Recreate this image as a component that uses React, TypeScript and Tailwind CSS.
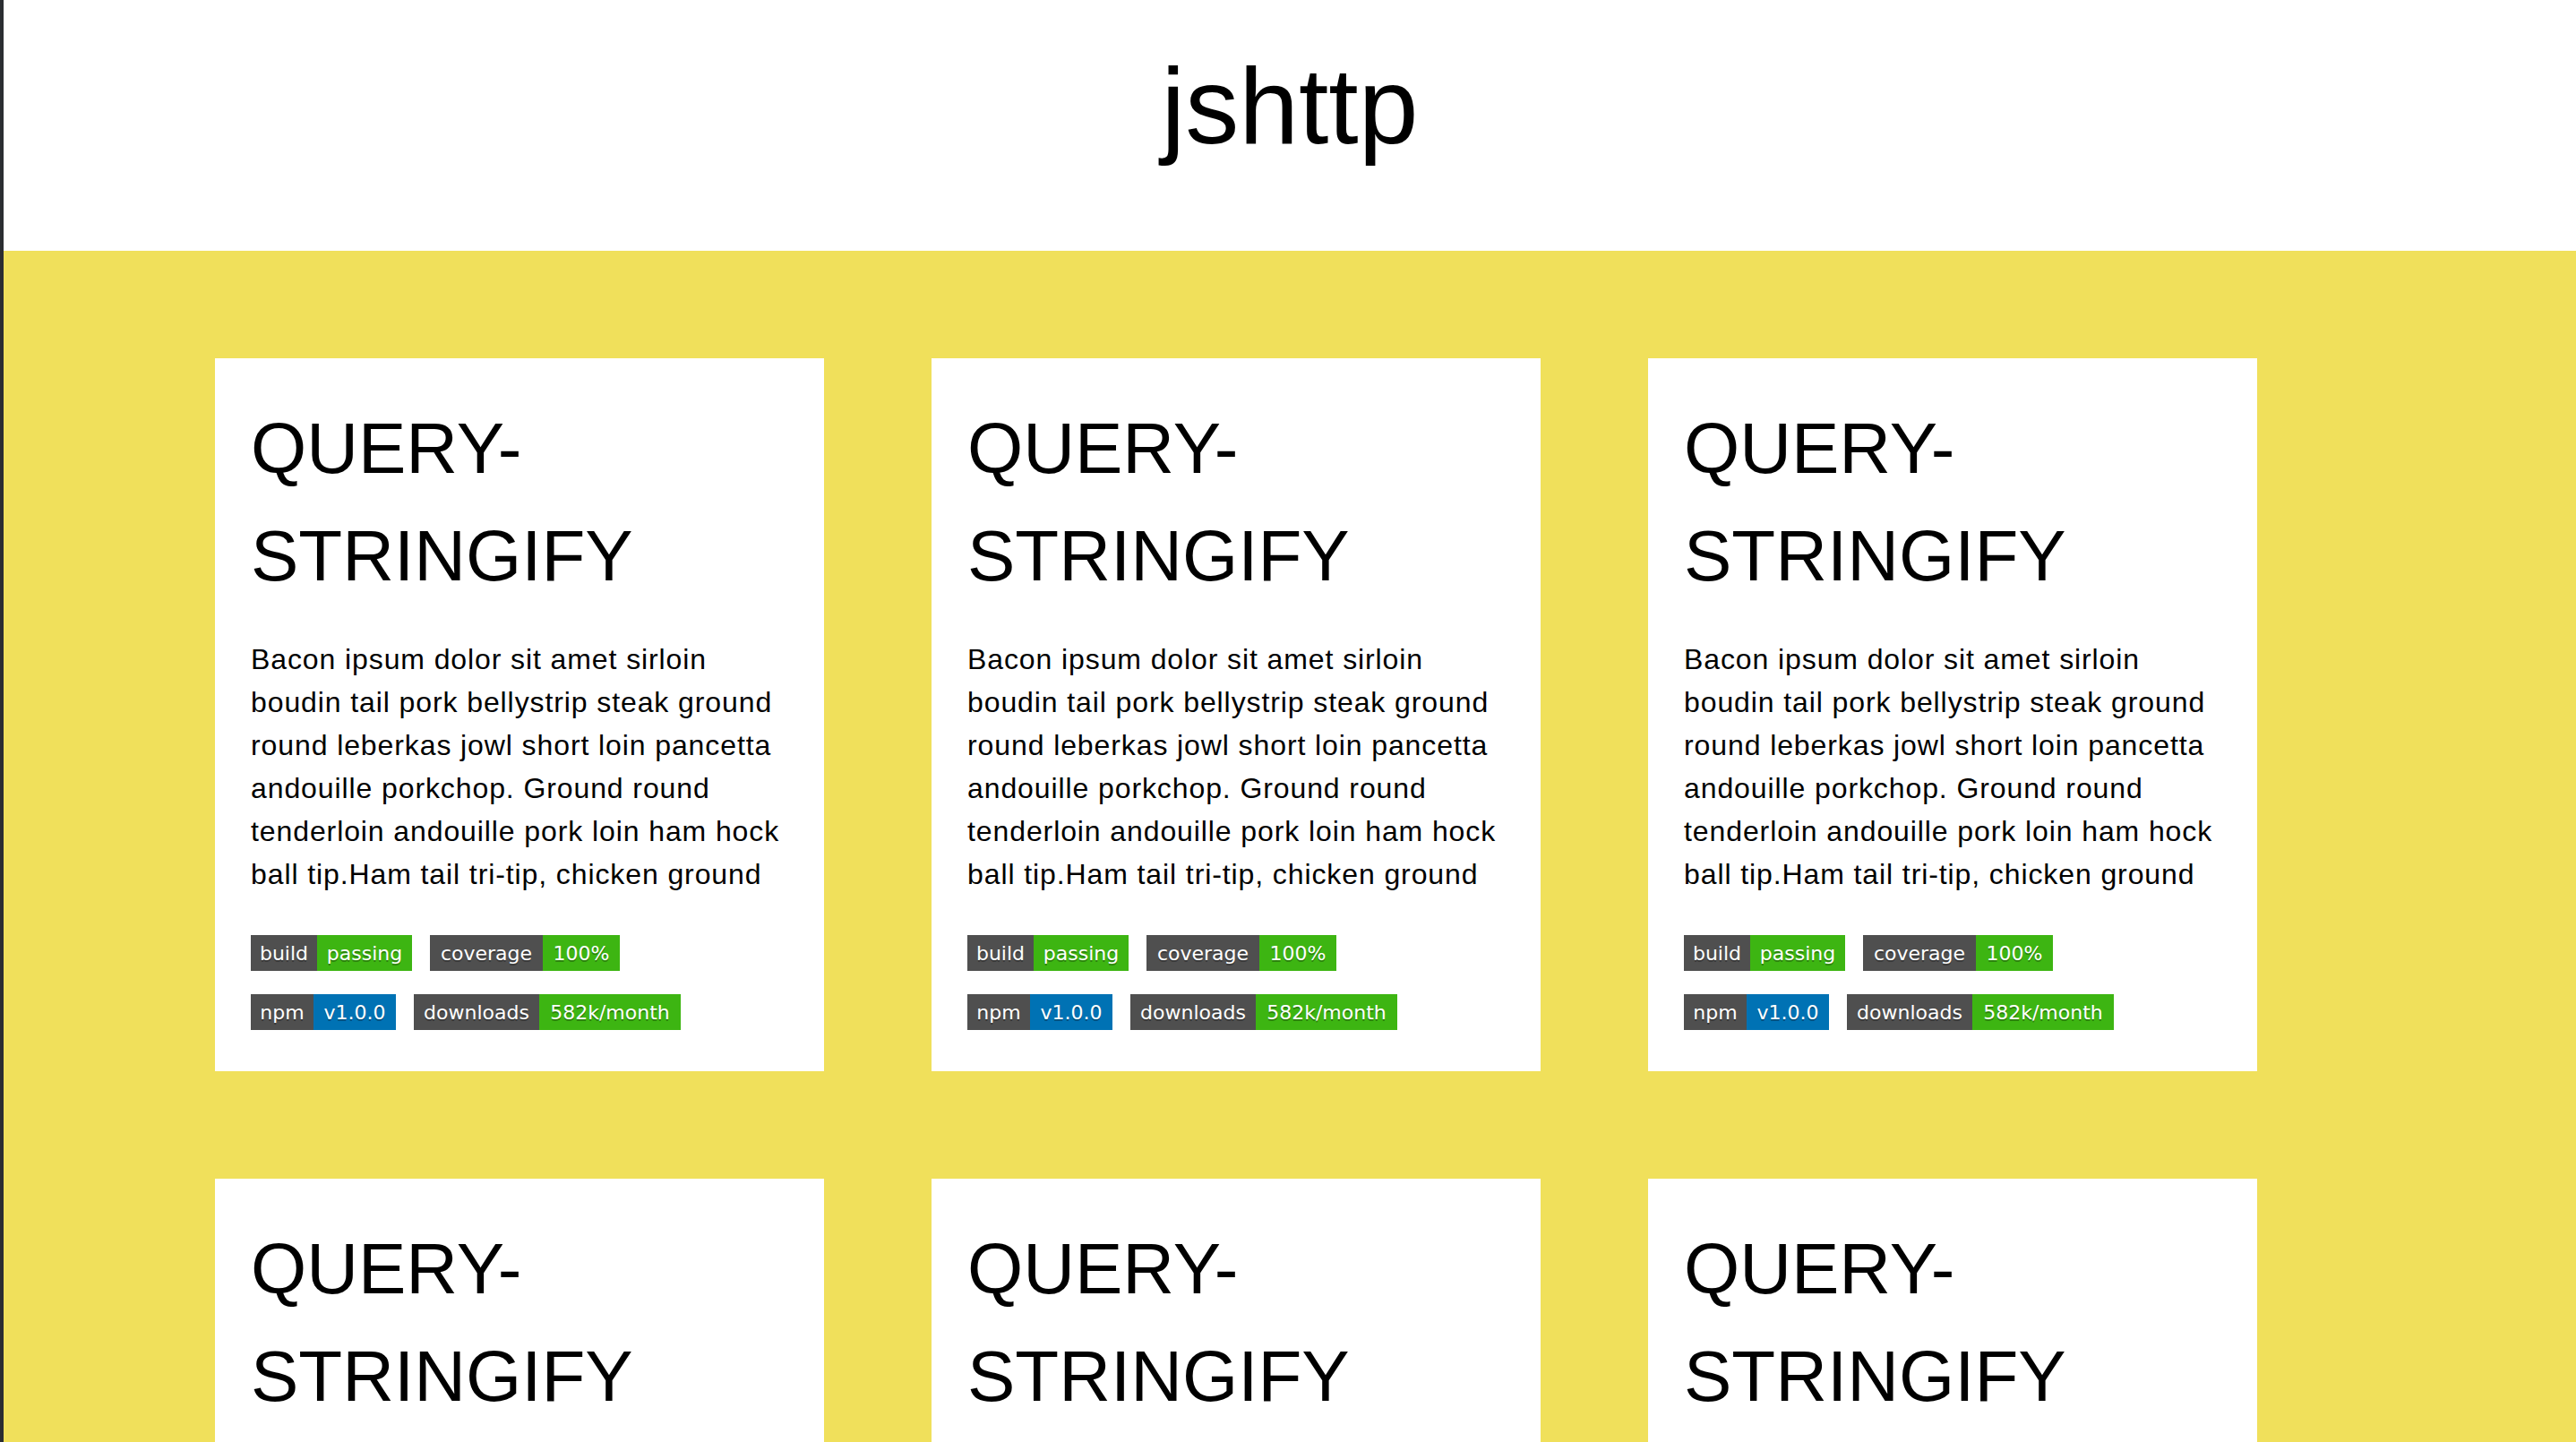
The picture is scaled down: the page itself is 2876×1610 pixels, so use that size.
const badges = [
  [
    { label: "build", labelW: "w-[74px]", value: "passing", valueW: "w-[106px]", color: "bg-[#3db512]" },
    { label: "coverage", labelW: "w-[126px]", value: "100%", valueW: "w-[86px]", color: "bg-[#3db512]" },
  ],
  [
    { label: "npm", labelW: "w-[70px]", value: "v1.0.0", valueW: "w-[92px]", color: "bg-[#0072b4]" },
    { label: "downloads", labelW: "w-[140px]", value: "582k/month", valueW: "w-[158px]", color: "bg-[#3db512]" },
  ],
];

const lines = [
  "Bacon ipsum dolor sit amet sirloin",
  "boudin tail pork bellystrip steak ground",
  "round leberkas jowl short loin pancetta",
  "andouille porkchop. Ground round",
  "tenderloin andouille pork loin ham hock",
  "ball tip.Ham tail tri-tip, chicken ground",
];

function Badge({ label, labelW, value, valueW, color }: (typeof badges)[0][0]) {
  return (
    <div className="flex h-[40px] font-['DejaVu_Sans','Verdana',sans-serif] text-[22px] text-white [text-shadow:0_2px_0_rgba(1,1,1,0.3)]">
      <span className={`${labelW} flex items-center justify-center bg-[#4f4f4f]`}>{label}</span>
      <span className={`${valueW} ${color} flex items-center justify-center`}>{value}</span>
    </div>
  );
}

function Card() {
  return (
    <div className="w-[680px] bg-white px-[40px] pt-[41px] pb-[46px]">
      <h2 className="text-[80px] leading-[120px] text-black">QUERY-STRINGIFY</h2>
      <p className="mt-[31px] text-[32px] leading-[48px] tracking-[0.9px] text-black">
        {lines.map((l) => (
          <span key={l} className="block whitespace-nowrap">
            {l}
          </span>
        ))}
      </p>
      <div className="mt-[44px] flex flex-col gap-[26px]">
        {badges.map((row, i) => (
          <div key={i} className="flex gap-[20px]">
            {row.map((b) => (
              <Badge key={b.label} {...b} />
            ))}
          </div>
        ))}
      </div>
    </div>
  );
}

export default function App() {
  return (
    <div className="flex min-h-screen font-['Liberation_Sans','Helvetica',Arial,sans-serif]">
      {/* window edge */}
      <div className="w-[4px] shrink-0 bg-[#2b2d31]"></div>

      <div className="flex-1">
        <header className="h-[280px] bg-white text-center">
          <h1 className="pt-[58px] text-[120px] leading-none text-black">jshttp</h1>
        </header>

        <main className="bg-[#f0e05b] pl-[236px] py-[120px]">
          <div className="grid grid-cols-[680px_680px_680px] gap-[120px]">
            {Array.from({ length: 6 }).map((_, i) => (
              <Card key={i} />
            ))}
          </div>
        </main>
      </div>
    </div>
  );
}
